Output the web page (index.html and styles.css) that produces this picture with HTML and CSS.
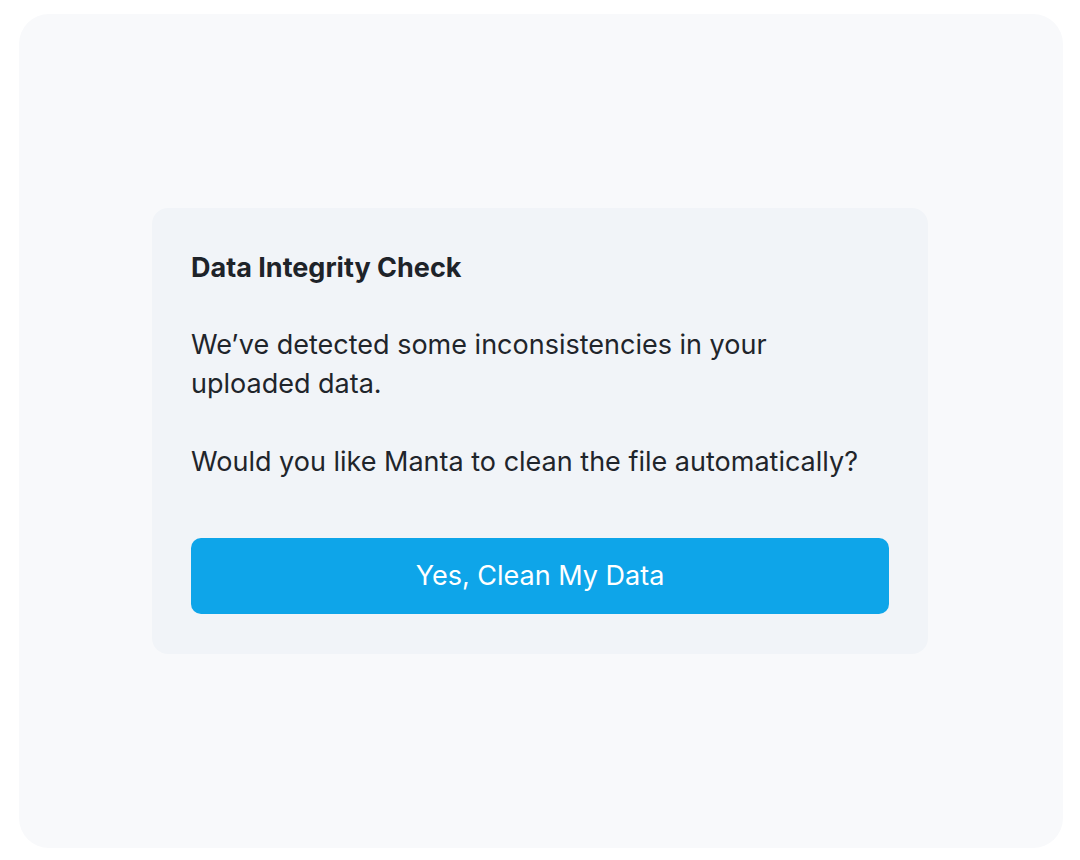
FILE: index.html
```html
<!DOCTYPE html>
<html lang="en">
<head>
<meta charset="utf-8">
<title>Data Integrity Check</title>
<link rel="stylesheet" href="styles.css">
</head>
<body>
<div class="panel">
  <section class="card">
    <h2 class="title">Data Integrity Check</h2>
    <p class="text">We’ve detected some inconsistencies in your uploaded data.</p>
    <p class="text">Would you like Manta to clean the file automatically?</p>
    <button class="btn" type="button">Yes, Clean My Data</button>
  </section>
</div>
</body>
</html>
```
FILE: styles.css
```css
html, body {
  margin: 0;
  padding: 0;
  background: #ffffff;
}
body {
  padding: 14px 17px 12px 19px;
  font-family: "Inter", "Noto Sans", sans-serif;
}
.panel {
  width: 1044px;
  height: 834px;
  box-sizing: border-box;
  padding-right: 2px;
  background: #f8f9fb;
  border-radius: 30px;
  display: flex;
  align-items: center;
  justify-content: center;
}
.card {
  width: 776px;
  box-sizing: border-box;
  background: #f1f4f8;
  border-radius: 16px;
  padding: 40px 39px 40px 39px;
  display: flex;
  flex-direction: column;
}
.title {
  margin: 0 0 37px;
  font-size: 27px;
  line-height: 40px;
  font-weight: 650;
  color: #1e2329;
}
.text {
  margin: 0 0 39px;
  font-size: 27px;
  line-height: 39px;
  font-weight: 400;
  color: #1f252b;
  max-width: 620px;
}
.text + .text {
  max-width: none;
  margin-bottom: 57px;
}
.btn {
  border: 0;
  border-radius: 10px;
  background: #0ea5e9;
  color: #ffffff;
  font-family: inherit;
  font-size: 27px;
  line-height: 38px;
  padding: 19px 0;
  font-weight: 400;
  width: 100%;
  cursor: pointer;
}
```
